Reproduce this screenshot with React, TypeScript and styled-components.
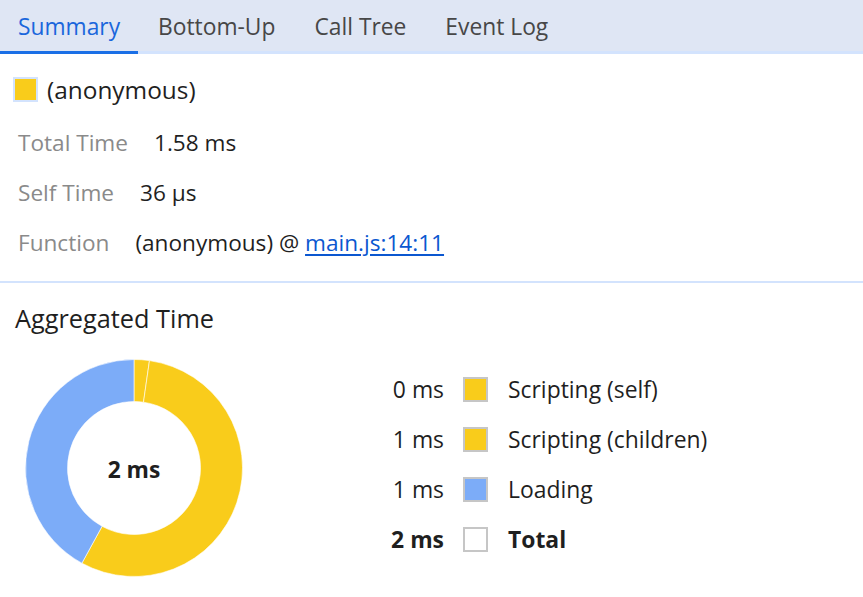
import React from "react";
import styled, { createGlobalStyle } from "styled-components";

const Global = createGlobalStyle`
  html, body { margin: 0; padding: 0; background: #ffffff; }
  body { font-family: "Open Sans", "Noto Sans", sans-serif; color: #1f1f1f; }
  * { box-sizing: border-box; }
`;

const Page = styled.div`
  width: 863px;
  height: 597px;
  overflow: hidden;
  background: #fff;
`;

const TabBar = styled.div`
  display: flex;
  height: 54px;
  background: #dfe6f4;
  border-bottom: 3px solid #d3e3fd;
`;

const Tab = styled.div<{ $active?: boolean }>`
  position: relative;
  display: flex;
  align-items: center;
  padding: 2px 19px 0 ${(p) => (p.$active ? "18px" : "20px")};
  width: ${(p) => (p.$active ? "138px" : "auto")};
  font-size: 22.8px;
  color: ${(p) => (p.$active ? "#1a66dc" : "#474747")};
  &::after {
    content: "";
    display: ${(p) => (p.$active ? "block" : "none")};
    position: absolute;
    left: 0;
    right: 0;
    bottom: -3px;
    height: 3px;
    background: #1a6fe6;
  }
`;

const Details = styled.div`
  padding: 17px 0 14px 0;
  border-bottom: 2px solid #d3e3fd;
`;

const Title = styled.div`
  display: flex;
  align-items: center;
  height: 36px;
  padding-left: 13px;
  font-size: 24.4px;
  gap: 9px;
  margin-bottom: 10px;
`;

const Swatch = styled.span<{ $color: string; $border: string }>`
  display: inline-block;
  width: 25px;
  height: 25px;
  background: ${(p) => p.$color};
  border: 2px solid ${(p) => p.$border};
`;

const Row = styled.div`
  display: flex;
  align-items: center;
  height: 50px;
  padding-left: 18px;
  font-size: 22.6px;
`;

const Label = styled.span`
  color: #8a8a8a;
  margin-right: 26px;
`;

const Value = styled.span`
  color: #1f1f1f;
`;

const Link = styled.span`
  color: #0b57d0;
  text-decoration: underline;
  text-underline-offset: 3px;
`;

const Aggregated = styled.div`
  padding: 17px 0 0 15px;
`;

const SectionTitle = styled.div`
  height: 36px;
  display: flex;
  align-items: center;
  font-size: 25.3px;
  color: #1f1f1f;
`;

const Chart = styled.div`
  display: flex;
  align-items: flex-start;
  margin-top: 23px;
`;

const DonutBox = styled.div`
  position: relative;
  width: 218px;
  height: 218px;
  margin-left: 10px;
  flex: none;
`;

const DonutLabel = styled.div`
  position: absolute;
  inset: 0;
  display: flex;
  align-items: center;
  justify-content: center;
  font-size: 22.8px;
  font-weight: 700;
  color: #1f1f1f;
  padding-top: 3px;
`;

const Legend = styled.div`
  display: grid;
  grid-template-columns: 104px 25px auto;
  column-gap: 19px;
  grid-auto-rows: 50px;
  align-items: center;
  margin-left: 97px;
  margin-top: 5px;
  font-size: 22.9px;
`;

const LegendValue = styled.span<{ $bold?: boolean }>`
  text-align: right;
  font-weight: ${(p) => (p.$bold ? 700 : 400)};
`;

const LegendLabel = styled.span<{ $bold?: boolean }>`
  margin-left: 1px;
  font-weight: ${(p) => (p.$bold ? 700 : 400)};
`;

const YELLOW = "#f9cc1b";
const BLUE = "#7cacf8";

function arc(cx: number, cy: number, R: number, r: number, a0: number, a1: number) {
  const rad = (a: number) => ((a - 90) * Math.PI) / 180;
  const p = (rr: number, a: number) => [cx + rr * Math.cos(rad(a)), cy + rr * Math.sin(rad(a))];
  const [x0, y0] = p(R, a0);
  const [x1, y1] = p(R, a1);
  const [x2, y2] = p(r, a1);
  const [x3, y3] = p(r, a0);
  const large = a1 - a0 > 180 ? 1 : 0;
  return `M${x0} ${y0} A${R} ${R} 0 ${large} 1 ${x1} ${y1} L${x2} ${y2} A${r} ${r} 0 ${large} 0 ${x3} ${y3} Z`;
}

const segments = [
  { from: 0, to: 8.2, color: YELLOW },
  { from: 8.2, to: 208.7, color: YELLOW },
  { from: 208.7, to: 360, color: BLUE },
];

function Donut() {
  return (
    <DonutBox>
      <svg width="218" height="218" viewBox="0 0 218 218">
        {segments.map((s, i) => (
          <path
            key={i}
            d={arc(109, 109, 108.5, 66.5, s.from, s.to - 0.0001)}
            fill={s.color}
            stroke="#ffffff"
            strokeWidth={0.6}
          />
        ))}
      </svg>
      <DonutLabel>2 ms</DonutLabel>
    </DonutBox>
  );
}

const legend = [
  { v: "0 ms", c: YELLOW, l: "Scripting (self)" },
  { v: "1 ms", c: YELLOW, l: "Scripting (children)" },
  { v: "1 ms", c: BLUE, l: "Loading" },
  { v: "2 ms", c: "#ffffff", l: "Total", bold: true },
];

export default function App() {
  return (
    <Page>
      <Global />
      <TabBar>
        <Tab $active>Summary</Tab>
        <Tab>Bottom-Up</Tab>
        <Tab>Call Tree</Tab>
        <Tab>Event Log</Tab>
      </TabBar>
      <Details>
        <Title>
          <Swatch $color={YELLOW} $border="#d3e3fd" />
          (anonymous)
        </Title>
        <Row>
          <Label>Total Time</Label>
          <Value>1.58 ms</Value>
        </Row>
        <Row>
          <Label>Self Time</Label>
          <Value>36 µs</Value>
        </Row>
        <Row>
          <Label>Function</Label>
          <Value>
            (anonymous) @ <Link>main.js:14:11</Link>
          </Value>
        </Row>
      </Details>
      <Aggregated>
        <SectionTitle>Aggregated Time</SectionTitle>
        <Chart>
          <Donut />
          <Legend>
            {legend.map((it) => (
              <React.Fragment key={it.l}>
                <LegendValue $bold={it.bold}>{it.v}</LegendValue>
                <Swatch $color={it.c} $border="#c6c6c6" />
                <LegendLabel $bold={it.bold}>{it.l}</LegendLabel>
              </React.Fragment>
            ))}
          </Legend>
        </Chart>
      </Aggregated>
    </Page>
  );
}
